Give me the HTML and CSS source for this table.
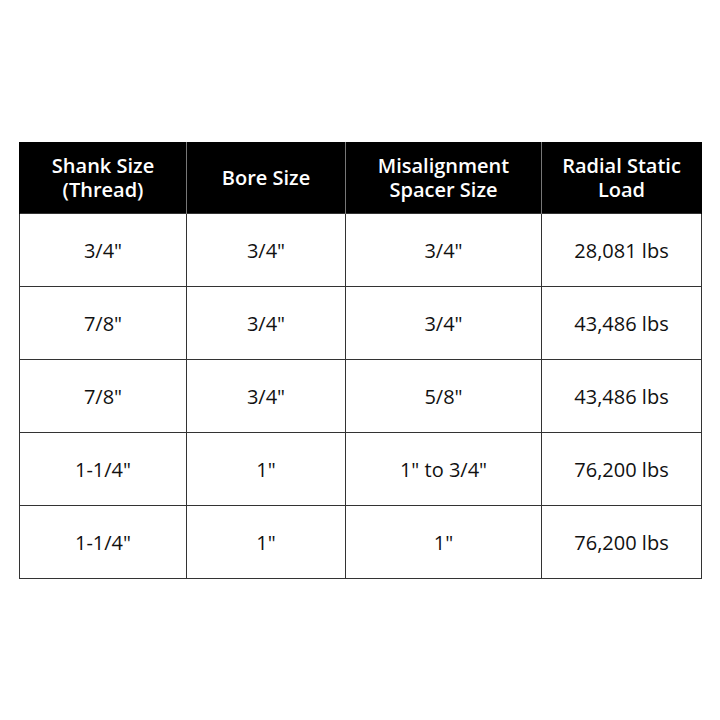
FILE: index.html
```html
<!DOCTYPE html>
<html>
<head>
<meta charset="utf-8">
<link rel="stylesheet" href="styles.css">
</head>
<body>
<div class="page">
<table class="spec">
<colgroup>
<col class="c1"><col class="c2"><col class="c3"><col class="c4">
</colgroup>
<thead>
<tr><th>Shank Size<br>(Thread)</th><th>Bore Size</th><th>Misalignment<br>Spacer Size</th><th>Radial Static<br>Load</th></tr>
</thead>
<tbody>
<tr><td>3/4"</td><td>3/4"</td><td>3/4"</td><td>28,081 lbs</td></tr>
<tr><td>7/8"</td><td>3/4"</td><td>3/4"</td><td>43,486 lbs</td></tr>
<tr><td>7/8"</td><td>3/4"</td><td>5/8"</td><td>43,486 lbs</td></tr>
<tr><td>1-1/4"</td><td>1"</td><td>1" to 3/4"</td><td>76,200 lbs</td></tr>
<tr><td>1-1/4"</td><td>1"</td><td>1"</td><td>76,200 lbs</td></tr>
</tbody>
</table>
</div>
</body>
</html>
```
FILE: styles.css
```css
html, body { margin: 0; padding: 0; background: #fff; }
.page { padding: 142px 0 0 19px; }
.spec {
  border-collapse: collapse;
  table-layout: fixed;
  width: 682px;
  font-family: "Open Sans", "Liberation Sans", sans-serif;
}
.c1 { width: 167px; }
.c2 { width: 159px; }
.c3 { width: 196px; }
.c4 { width: 160px; }
.spec th {
  background: #000;
  color: #fff;
  font-weight: 600;
  font-size: 20px;
  line-height: 24px;
  height: 71px;
  padding: 0;
  text-align: center;
  vertical-align: middle;
  border-left: 1.5px solid #777;
  border-right: 1.5px solid #777;
}
.spec th:first-child { border-left: 1px solid #000; }
.spec th:last-child { border-right: 1px solid #000; }
.spec td {
  color: #111;
  font-size: 20px;
  height: 72px;
  padding: 0;
  text-align: center;
  vertical-align: middle;
  border: 1.5px solid #333;
}
```
